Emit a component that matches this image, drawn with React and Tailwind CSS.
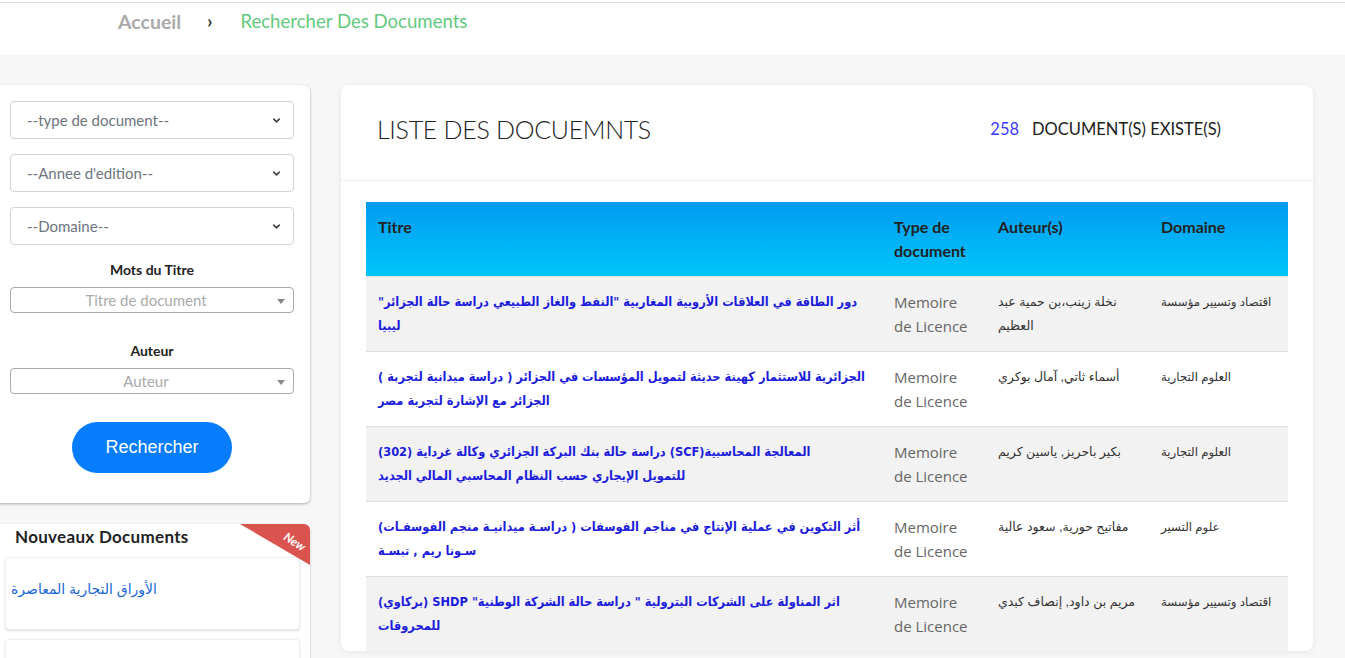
import { ChevronDown } from 'lucide-react'

const ui = { fontFamily: 'Lato, "Open Sans", "DejaVu Sans", sans-serif' }
const ar = { fontFamily: '"DejaVu Sans Condensed", "DejaVu Sans", sans-serif' }
const arPlain = { fontFamily: '"Liberation Sans", "DejaVu Sans", sans-serif' }
const open = { fontFamily: '"Open Sans", Lato, sans-serif' }

const docs = [
  {
    titre: 'دور الطاقة في العلاقات الأروبية المغاربية "النفط والغاز الطبيعي دراسة حالة الجزائر" ليبيا',
    auteur: 'نخلة زينب،بن حمية عبد العظيم',
    domaine: 'اقتصاد وتسيير مؤسسة',
  },
  {
    titre: 'الجزائرية للاستثمار كهينة حديثة لتمويل المؤسسات في الجزائر ( دراسة ميدانية لتجربة ) الجزائر مع الإشارة لتجربة مصر',
    auteur: 'أسماء ثاتي, آمال بوكري',
    domaine: 'العلوم التجارية',
  },
  {
    titre: 'المعالجة المحاسبية(SCF) دراسة حالة بنك البركة الجزائري وكالة غرداية (302)\nللتمويل الإيجاري حسب النظام المحاسبي المالي الجديد',
    auteur: 'بكير باحريز, ياسين كريم',
    domaine: 'العلوم التجارية',
  },
  {
    titre: 'أثر التكوين في عملية الإنتاج في مناجم الفوسفات ( دراسـة ميدانيـة منجم الفوسفـات) سـونا ريم , تبسـة',
    auteur: 'مفاتيح حورية, سعود عالية',
    domaine: 'علوم التسير',
  },
  {
    titre: 'اثر المناولة على الشركات البترولية " دراسة حالة الشركة الوطنية" SHDP (بركاوي) للمحروقات',
    auteur: 'مريم بن داود, إنصاف كبدي',
    domaine: 'اقتصاد وتسيير مؤسسة',
  },
]

function FakeSelect({ label }) {
  return (
    <div className="flex h-[38px] items-center justify-between rounded border border-[#ced4da] bg-white pl-[16px] pr-[11px] text-[15px] text-[#6c757d]">
      <span>{label}</span>
      <ChevronDown className="h-[11px] w-[11px] text-[#444]" strokeWidth={3.5} />
    </div>
  )
}

function Select2({ placeholder }) {
  return (
    <div className="relative flex h-[26px] items-center justify-center rounded border border-[#aaa] bg-white pr-[12px] text-[15px] text-[#aaa]">
      <span>{placeholder}</span>
      <span className="absolute right-[8px] top-[11px] h-0 w-0 border-x-[4px] border-t-[5px] border-x-transparent border-t-[#888]" />
    </div>
  )
}

export default function App() {
  return (
    <div className="min-h-screen overflow-hidden bg-[#f7f7f7]" style={ui}>
      {/* Top breadcrumb */}
      <header className="h-[54px] bg-white pt-[2px]">
        <div className="h-px bg-[#dedede]" />
        <nav className="flex items-center pl-[118px] pt-[4px] text-[18px]">
          <span className="text-[19.5px] font-bold text-[#aaa]">Accueil</span>
          <span className="ml-[26px] text-[18px] font-bold text-[#333]">›</span>
          <span className="ml-[28px] text-[18.6px] text-[#63c97e]">Rechercher Des Documents</span>
        </nav>
      </header>

      <div className="flex items-start pt-[31px]">
        {/* Left column */}
        <aside className="-ml-[8px] w-[318px] shrink-0">
          <div className="rounded-md bg-white pb-[30px] pl-[18px] pr-[16px] pt-[16px] shadow-[0_1px_3px_rgba(0,0,0,0.3)]">
            <div className="flex flex-col gap-[15px]">
              <FakeSelect label="--type de document--" />
              <FakeSelect label="--Annee d'edition--" />
              <FakeSelect label="--Domaine--" />
            </div>
            <div className="mt-[14px] text-center text-[14px] font-bold leading-[22px] text-[#222]">Mots du Titre</div>
            <div className="mt-[6px]">
              <Select2 placeholder="Titre de document" />
            </div>
            <div className="mt-[27px] text-center text-[14px] font-bold leading-[22px] text-[#222]">Auteur</div>
            <div className="mt-[6px]">
              <Select2 placeholder="Auteur" />
            </div>
            <div className="mt-[28px] flex justify-center">
              <button
                className="h-[51px] w-[160px] rounded-full bg-[#067dfc] text-[18px] font-medium text-white"
                style={arPlain}
              >
                Rechercher
              </button>
            </div>
          </div>

          <div className="relative mt-[21px] overflow-hidden rounded-t-md bg-white pb-[20px] pl-[13px] pr-[10px] shadow-[0_1px_3px_rgba(0,0,0,0.2)]">
            <div className="pl-[10px] pt-[2px] text-[17px] font-bold leading-[22px] tracking-[0.3px] text-[#222]">Nouveaux Documents</div>
            <div className="absolute right-0 top-0 h-[41px] w-[70px] bg-[#d9534f] [clip-path:polygon(0_0,100%_0,100%_100%)]" />
            <span className="absolute right-[4px] top-[9px] rotate-[33deg] text-[12px] font-bold italic text-white">New</span>
            <div className="mt-[9px] flex h-[73px] items-center rounded-sm border border-[#eee] bg-white pb-[8px] pl-[5px] shadow-[0_1px_2px_rgba(0,0,0,0.15)]">
              <span dir="rtl" className="text-[14px] text-[#1a66d6]" style={arPlain}>الأوراق التجارية المعاصرة</span>
            </div>
            <div className="mt-[9px] h-[73px] rounded-sm border border-[#eee] bg-white shadow-[0_1px_2px_rgba(0,0,0,0.15)]" />
          </div>
        </aside>

        {/* Main card */}
        <main className="ml-[31px] w-[972px] shrink-0 rounded-lg bg-white shadow-[0_1px_6px_rgba(0,0,0,0.08)]">
          <div className="flex h-[96px] items-center border-b border-[#eee] pb-[6px]">
            <h1 className="pl-[36px] text-[25px] font-light tracking-[-0.3px] text-[#222]">LISTE DES DOCUEMNTS</h1>
            <div className="ml-auto flex items-center pr-[92px] text-[16.5px] text-[#222]">
              <span className="text-[#3a3aff]">258</span>
              <span className="ml-[13px]">DOCUMENT(S) EXISTE(S)</span>
            </div>
          </div>

          <div className="px-[25px] pt-[21px]">
            <table className="w-full table-fixed border-collapse">
              <colgroup>
                <col className="w-[516px]" />
                <col className="w-[104px]" />
                <col className="w-[163px]" />
                <col />
              </colgroup>
              <thead>
                <tr className="bg-linear-to-b from-[#049bef] to-[#00c6fb] text-left align-top text-[16px] font-bold leading-[24px] text-[#222]">
                  <th className="px-[12px] py-[13px] font-bold">Titre</th>
                  <th className="px-[12px] py-[13px] font-bold">Type de document</th>
                  <th className="px-[12px] py-[13px] font-bold">Auteur(s)</th>
                  <th className="px-[12px] py-[13px] font-bold">Domaine</th>
                </tr>
              </thead>
              <tbody>
                {docs.map((d, i) => (
                  <tr key={i} className={`border-t border-[#ddd] align-top ${i % 2 === 0 ? 'bg-[#f2f2f2]' : 'bg-white'}`}>
                    <td className="px-[12px] py-[13px] leading-[24px]">
                      <div dir="rtl" className="whitespace-pre-line text-left text-[12.7px] font-bold text-[#1c1cdc]" style={ar}>
                        {d.titre}
                      </div>
                    </td>
                    <td className="px-[12px] py-[13px] text-[15px] leading-[24px] text-[#666]" style={open}>
                      Memoire de Licence
                    </td>
                    <td className="px-[12px] py-[13px] leading-[24px]">
                      <div dir="rtl" className="text-left text-[12.5px] text-[#333]" style={arPlain}>
                        {d.auteur}
                      </div>
                    </td>
                    <td className="px-[12px] py-[13px] leading-[24px]">
                      <div dir="rtl" className="text-left text-[11.8px] text-[#333]" style={arPlain}>
                        {d.domaine}
                      </div>
                    </td>
                  </tr>
                ))}
              </tbody>
            </table>
          </div>
        </main>
      </div>
    </div>
  )
}
